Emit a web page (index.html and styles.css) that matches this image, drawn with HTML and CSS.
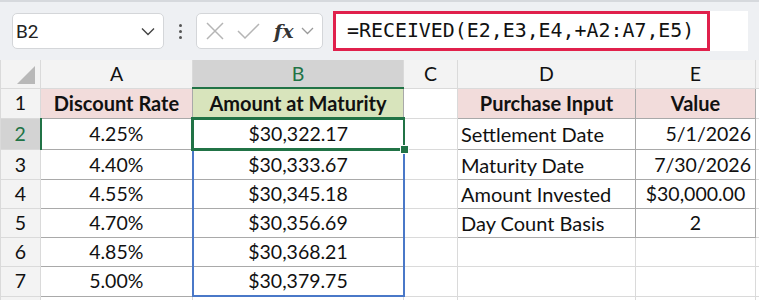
FILE: index.html
```html
<!DOCTYPE html>
<html lang="en">
<head>
  <meta charset="UTF-8">
  <title>RECEIVED</title>
  <link rel="stylesheet" href="styles.css">
</head>
<body>
  <div class="formula-bar">
    <div class="name-box">
      <span>B2</span>
      <svg class="chev" width="14" height="9" viewBox="0 0 14 9"><path d="M1 1.5 L7 7.5 L13 1.5" fill="none" stroke="#444" stroke-width="1.4"/></svg>
    </div>
    <div class="dots"><i></i><i></i><i></i></div>
    <div class="fx-box">
      <svg width="20" height="20" viewBox="0 0 20 20"><path d="M2 2 L18 18 M18 2 L2 18" stroke="#b5b5b5" stroke-width="1.5"/></svg>
      <svg width="23" height="18" viewBox="0 0 23 18"><path d="M1 9 L8 16 L22 2" fill="none" stroke="#b5b5b5" stroke-width="1.5"/></svg>
      <span class="fx">fx</span>
      <svg class="chev" width="13" height="8" viewBox="0 0 13 8"><path d="M1 1 L6.5 6.5 L12 1" fill="none" stroke="#9a9a9a" stroke-width="1.3"/></svg>
    </div>
    <div class="formula">
      <span class="formula-text">=RECEIVED(E2,E3,E4,+A2:A7,E5)</span>
    </div>
  </div>

  <table class="sheet">
    <colgroup>
      <col style="width:40px"><col style="width:152px"><col style="width:211px"><col style="width:54px"><col style="width:178px"><col style="width:120px"><col>
    </colgroup>
    <tr class="col-heads">
      <th class="corner"><span class="tri"></span></th>
      <th>A</th><th class="sel-col">B</th><th>C</th><th>D</th><th>E</th><th></th>
    </tr>
    <tr>
      <th class="rh">1</th>
      <td class="hd pink box">Discount Rate</td>
      <td class="hd green box">Amount at Maturity</td>
      <td></td>
      <td class="hd pink box">Purchase Input</td>
      <td class="hd pink box">Value</td>
      <td></td>
    </tr>
    <tr>
      <th class="rh sel-row">2</th>
      <td class="c box">4.25%</td>
      <td class="c range active">$30,322.17<span class="handle"></span></td>
      <td></td>
      <td class="l box">Settlement Date</td>
      <td class="r box">5/1/2026</td>
      <td></td>
    </tr>
    <tr>
      <th class="rh">3</th>
      <td class="c box">4.40%</td>
      <td class="c range">$30,333.67</td>
      <td></td>
      <td class="l box">Maturity Date</td>
      <td class="r box">7/30/2026</td>
      <td></td>
    </tr>
    <tr>
      <th class="rh">4</th>
      <td class="c box">4.55%</td>
      <td class="c range">$30,345.18</td>
      <td></td>
      <td class="l box">Amount Invested</td>
      <td class="c box">$30,000.00</td>
      <td></td>
    </tr>
    <tr>
      <th class="rh">5</th>
      <td class="c box">4.70%</td>
      <td class="c range">$30,356.69</td>
      <td></td>
      <td class="l box">Day Count Basis</td>
      <td class="c box">2</td>
      <td></td>
    </tr>
    <tr>
      <th class="rh">6</th>
      <td class="c box">4.85%</td>
      <td class="c range">$30,368.21</td>
      <td></td><td></td><td></td><td></td>
    </tr>
    <tr>
      <th class="rh">7</th>
      <td class="c box">5.00%</td>
      <td class="c range last">$30,379.75</td>
      <td></td><td></td><td></td><td></td>
    </tr>
    <tr>
      <th class="rh"></th>
      <td></td><td></td><td></td><td></td><td></td><td></td>
    </tr>
  </table>
</body>
</html>
```

FILE: styles.css
```css
body {
  margin: 0;
  background-color: #ffffff;
  font-family: Lato, "Open Sans", sans-serif;
  overflow: hidden;
}

.formula-bar {
  display: flex;
  align-items: center;
  height: 60px;
  padding-left: 12px;
  background-color: #eef0f3;
  border-top: 2px solid #d6d9dd;
  box-sizing: border-box;
}

.name-box {
  display: flex;
  align-items: center;
  justify-content: space-between;
  width: 152px;
  height: 36px;
  padding: 0 8px 0 3px;
  box-sizing: border-box;
  background-color: #fff;
  border: 1px solid #d4d6d9;
  border-radius: 5px;
  font-family: Roboto, sans-serif;
  font-size: 19px;
  color: #222;
}

.dots {
  display: flex;
  flex-direction: column;
  gap: 3px;
  width: 32px;
  align-items: center;
}

.dots i {
  width: 3px;
  height: 3px;
  background-color: #555;
  border-radius: 50%;
}

.fx-box {
  display: flex;
  align-items: center;
  width: 127px;
  height: 36px;
  padding-left: 8px;
  gap: 12px;
  box-sizing: border-box;
  background-color: #fff;
  border: 1px solid #d4d6d9;
  border-radius: 5px;
}

.fx {
  font-family: "DejaVu Serif", serif;
  font-style: italic;
  font-weight: bold;
  font-size: 19px;
  color: #333;
  margin-left: 2px;
  margin-right: -5px;
}

.formula {
  flex: 1;
  display: flex;
  align-items: center;
  margin-left: 10px;
  margin-right: 11px;
  height: 40px;
  background-color: #fff;
}

.formula-text {
  display: block;
  width: 377px;
  height: 40px;
  line-height: 34px;
  padding-left: 11px;
  box-sizing: border-box;
  border: 3px solid #e0204c;
  font-family: "DejaVu Sans Mono", monospace;
  font-size: 19.9px;
  color: #111;
}

.sheet {
  border-collapse: collapse;
  table-layout: fixed;
  width: 780px;
}

.sheet th,
.sheet td {
  border: 1px solid #dadada;
  padding: 0;
  height: 28px;
  line-height: 24px;
  font-size: 19.5px;
  font-weight: normal;
  color: #111;
  white-space: nowrap;
  overflow: hidden;
}

.col-heads th {
  height: 27px;
  background-color: #f3f3f3;
  text-align: center;
  border-top: none;
}

.col-heads .sel-col {
  background-color: #d3d3d3;
  color: #217346;
  border-bottom: 2px solid #217346;
}

.corner {
  position: relative;
}

.tri {
  position: absolute;
  right: 5px;
  bottom: 4px;
  width: 0;
  height: 0;
  border-left: 18px solid transparent;
  border-bottom: 18px solid #b8b8b8;
}

.rh {
  background-color: #f3f3f3;
  text-align: center;
}

.rh.sel-row {
  background-color: #d3d3d3;
  color: #217346;
  border-right: 2px solid #217346;
}

.sheet .hd {
  font-weight: 700;
  font-size: 20px;
  text-align: center;
}

.pink {
  background-color: #f2dcdb;
}

.green {
  background-color: #d8e4bc;
}

.sheet .box {
  border: 1px solid #a9a9a9;
}

.c {
  text-align: center;
}

.sheet .l {
  text-align: left;
  padding-left: 3px;
  font-size: 20px;
}

.sheet .r {
  text-align: right;
  padding-right: 4px;
}

.sheet .range {
  border-top: 1px solid #a9a9a9;
  border-bottom: 1px solid #a9a9a9;
  border-left: 2px solid #4a78c8;
  border-right: 2px solid #4a78c8;
}

.sheet .range.last {
  border-bottom: 2px solid #4a78c8;
}

.sheet .active {
  position: relative;
  overflow: visible;
  border: 3px solid #217346;
  border-right-width: 2px;
}

.handle {
  position: absolute;
  right: -6px;
  bottom: -6px;
  width: 7px;
  height: 7px;
  background-color: #217346;
  border: 1px solid #fff;
  z-index: 2;
}
```
